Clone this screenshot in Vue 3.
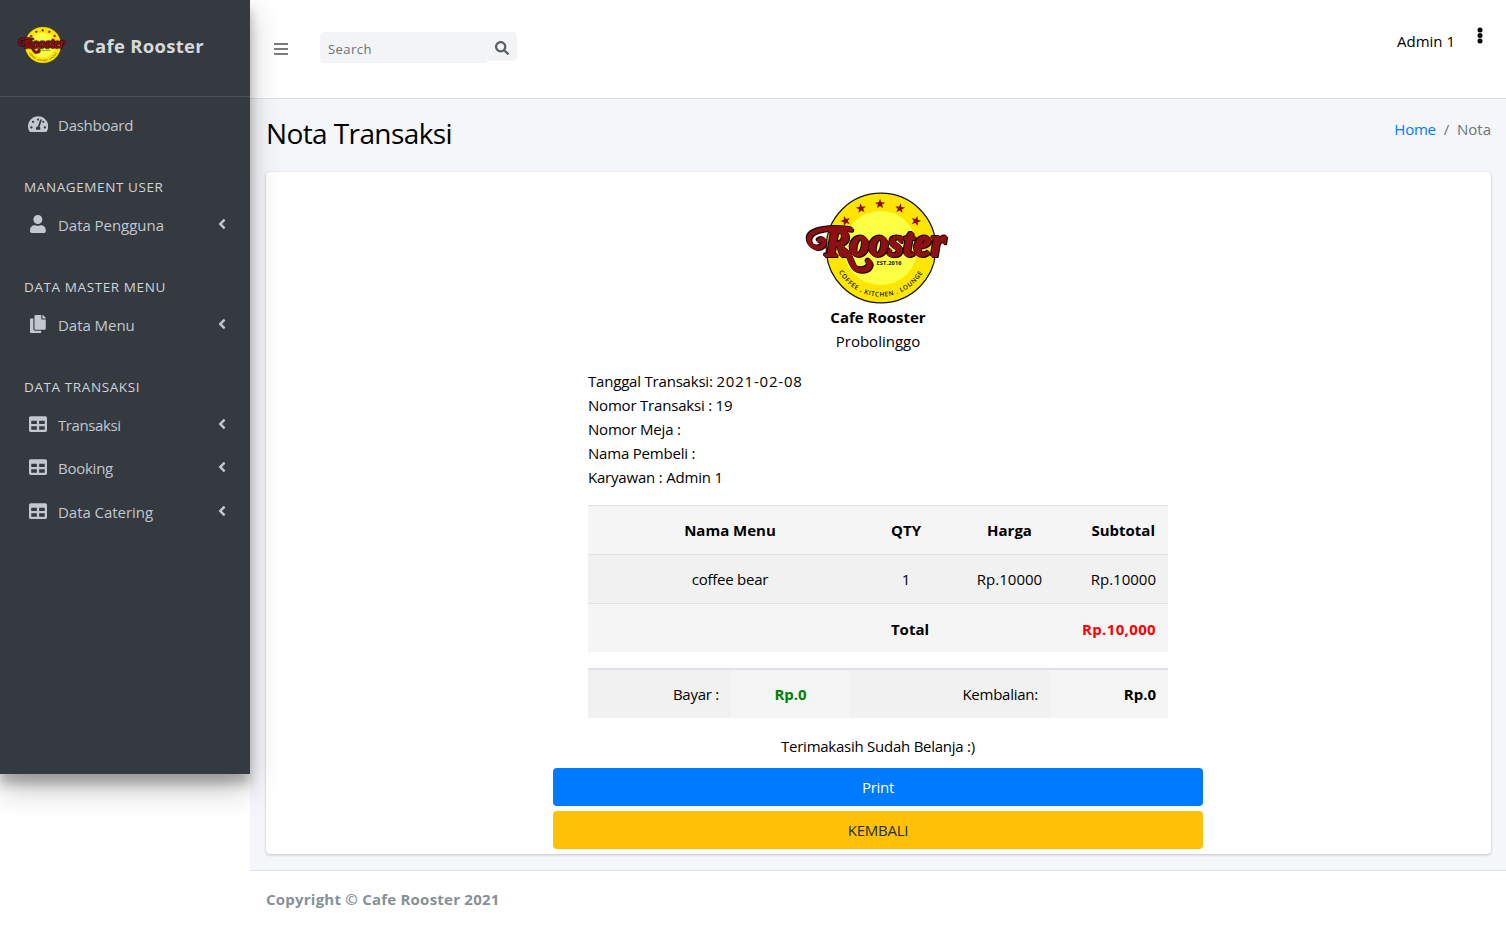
<script setup>
import { h } from 'vue'

const paths = {
  gauge: [576, 'M288 32C128.94 32 0 160.94 0 320c0 52.8 14.25 102.26 39.06 144.8 5.61 9.62 16.3 15.2 27.44 15.2h443c11.14 0 21.83-5.58 27.44-15.2C561.75 422.26 576 372.8 576 320c0-159.06-128.94-288-288-288zm0 64c14.71 0 26.58 10.13 30.32 23.65-1.11 2.26-2.64 4.23-3.45 6.67l-9.22 27.67c-5.13 3.49-10.97 6.01-17.64 6.01-17.67 0-32-14.33-32-32S270.33 96 288 96zM96 384c-17.67 0-32-14.33-32-32s14.33-32 32-32 32 14.33 32 32-14.33 32-32 32zm48-160c-17.67 0-32-14.33-32-32s14.33-32 32-32 32 14.33 32 32-14.33 32-32 32zm246.77-72.41l-61.33 184C343.13 347.33 352 364.54 352 384c0 11.72-3.38 22.55-8.88 32H232.88c-5.5-9.45-8.88-20.28-8.88-32 0-33.94 26.5-61.43 59.9-63.59l61.34-184.01c4.17-12.56 17.73-19.45 30.36-15.17 12.57 4.19 19.35 17.79 15.17 30.36zm14.66 57.2l15.52-46.55c3.47-1.29 7.13-2.23 11.05-2.23 17.67 0 32 14.33 32 32s-14.33 32-32 32c-11.38-.01-20.89-6.28-26.57-15.22zM480 384c-17.67 0-32-14.33-32-32s14.33-32 32-32 32 14.33 32 32-14.33 32-32 32z'],
  user: [448, 'M224 256c70.7 0 128-57.3 128-128S294.7 0 224 0 96 57.3 96 128s57.3 128 128 128zm89.6 32h-16.7c-22.2 10.2-46.9 16-72.9 16s-50.6-5.8-72.9-16h-16.7C60.2 288 0 348.2 0 422.4V464c0 26.5 21.5 48 48 48h352c26.5 0 48-21.5 48-48v-41.6c0-74.2-60.2-134.4-134.4-134.4z'],
  copy: [448, 'M320 448v40c0 13.255-10.745 24-24 24H24c-13.255 0-24-10.745-24-24V120c0-13.255 10.745-24 24-24h72v296c0 30.879 25.121 56 56 56h168zm0-344V0H152c-13.255 0-24 10.745-24 24v368c0 13.255 10.745 24 24 24h272c13.255 0 24-10.745 24-24V128H344c-13.2 0-24-10.8-24-24zm120.971-31.029L375.029 7.029A24 24 0 0 0 358.059 0H352v96h96v-6.059a24 24 0 0 0-7.029-16.97z'],
  table: [512, 'M464 32H48C21.49 32 0 53.49 0 80v352c0 26.51 21.49 48 48 48h416c26.51 0 48-21.49 48-48V80c0-26.51-21.49-48-48-48zM224 416H64v-96h160v96zm0-160H64v-96h160v96zm224 160H288v-96h160v96zm0-160H288v-96h160v96z'],
  angle: [256, 'M31.7 239l136-136c9.4-9.4 24.6-9.4 33.9 0l22.6 22.6c9.4 9.4 9.4 24.6 0 33.9L127.9 256l96.4 96.4c9.4 9.4 9.4 24.6 0 33.9L201.7 409c-9.4 9.4-24.6 9.4-33.9 0l-136-136c-9.5-9.4-9.5-24.6-.1-34z'],
  search: [512, 'M505 442.7L405.3 343c-4.5-4.5-10.6-7-17-7H372c27.6-35.3 44-79.7 44-128C416 93.1 322.9 0 208 0S0 93.1 0 208s93.1 208 208 208c48.3 0 92.7-16.4 128-44v16.3c0 6.4 2.5 12.5 7 17l99.7 99.7c9.4 9.4 24.6 9.4 33.9 0l28.3-28.3c9.4-9.4 9.4-24.6.1-34zM208 336c-70.7 0-128-57.2-128-128 0-70.7 57.2-128 128-128 70.7 0 128 57.2 128 128 0 70.7-57.2 128-128 128z'],
}

const Icon = (props) =>
  h('svg', { viewBox: `0 0 ${paths[props.name][0]} 512`, fill: 'currentColor' }, [
    h('path', { d: paths[props.name][1] }),
  ])
Icon.props = ['name']

const star = 'M0-5.2 1.3-1.7 5-1.6 2.1.7 3.1 4.2 0 2.1-3.1 4.2-2.1.7-5-1.6-1.3-1.7Z'
const stars = [[42.5, 48, -18], [58, 35.5, -8], [77, 31, 0], [97, 35.5, 8], [113, 48, 18]]
const swashes = [
  'M48 56.5C32 54 6 55 6 66C6 76 19 77 21 70.5C22 66.5 18.5 65 16 67.5',
  'M42 78C50 84 47 97 58 97C66 97 68.5 91.5 65.5 88.5',
]

const Logo = (props) => {
  return h('svg', { viewBox: '0 15 150 120' }, [
    h('circle', { cx: 78, cy: 75, r: 54.8, fill: '#ffe600', stroke: '#111', 'stroke-width': 1.2 }),
    h('circle', { cx: 77.5, cy: 75, r: 37, fill: '#fbff43' }),
    ...stars.map(([x, y, r]) => h('path', { d: star, fill: '#8e0d14', transform: `translate(${x} ${y}) rotate(${r})` })),
    h('g', { class: 'wordmark' }, [
      ...swashes.map((d, i) => h('path', { d, fill: 'none', stroke: '#8e1015', 'stroke-width': 4.6 + i, 'stroke-linecap': 'round' })),
      h('text', { x: 22, y: 82.5, textLength: 121, lengthAdjust: 'spacingAndGlyphs', class: 'word' }, [
        h('tspan', { 'font-size': 40 }, 'R'),
        h('tspan', { 'font-size': 41 }, 'ooster'),
      ]),
    ]),
    h('text', { x: 73.5, y: 92.2, class: 'est', textLength: 25 }, 'EST.2016'),
    h('path', { id: props.arc, d: 'M34.5 96.5A48.5 48.5 0 0 0 121.5 96.5', fill: 'none' }),
    h('text', { class: 'ring' }, [
      h('textPath', { href: '#' + props.arc, startOffset: '2.5%', textLength: 101 }, 'COFFEE . KITCHEN . LOUNGE'),
    ]),
  ])
}
Logo.props = ['arc']

const groups = [
  { items: [{ icon: 'gauge', label: 'Dashboard', leaf: true }] },
  { title: 'MANAGEMENT USER', items: [{ icon: 'user', label: 'Data Pengguna', cls: 'loose' }] },
  { title: 'DATA MASTER MENU', items: [{ icon: 'copy', label: 'Data Menu', cls: 'loose' }] },
  {
    title: 'DATA TRANSAKSI',
    items: [
      { icon: 'table', label: 'Transaksi', cls: 'tight' },
      { icon: 'table', label: 'Booking' },
      { icon: 'table', label: 'Data Catering', cls: 'loose' },
    ],
  },
]
const info = [
  ['Nomor Transaksi :', '19'],
  ['Nomor Meja :', ''],
  ['Nama Pembeli :', ''],
  ['Karyawan :', 'Admin 1'],
]
</script>

<template>
  <div class="page">
    <aside class="sidebar">
      <div class="brand">
        <Logo class="brand-logo" arc="arc-small" />
        <b>Cafe Rooster</b>
      </div>
      <nav>
        <section v-for="(g, i) in groups" :key="i">
          <h6 v-if="g.title">{{ g.title }}</h6>
          <a v-for="it in g.items" :key="it.label" class="item">
            <span class="ico"><Icon :name="it.icon" /></span>
            <span class="label" :class="it.cls">{{ it.label }}</span>
            <Icon v-if="!it.leaf" class="chev" name="angle" />
          </a>
        </section>
      </nav>
    </aside>

    <div class="main">
      <header class="topbar">
        <svg class="bars" viewBox="0 0 14 12"><path d="M0 1H14M0 6H14M0 11H14" stroke="#7b7b7b" stroke-width="2" /></svg>
        <div class="search">
          <div class="field">Search</div>
          <div class="go"><Icon name="search" /></div>
        </div>
        <span class="user">Admin 1</span>
        <svg class="dots" viewBox="0 0 6 17"><circle cx="3" cy="3" r="2.5" /><circle cx="3" cy="8.5" r="2.5" /><circle cx="3" cy="14" r="2.5" /></svg>
      </header>

      <div class="content">
        <div class="heading">
          <h1>Nota Transaksi</h1>
          <div class="crumbs"><a>Home</a><i>/</i><span>Nota</span></div>
        </div>

        <div class="card">
          <Logo class="logo" arc="arc-large" />
          <div class="center"><b>Cafe Rooster</b></div>
          <div class="center prob">Probolinggo</div>

          <div class="receipt">
            <div class="info">
              <div>Tanggal Transaksi: <span class="date">2021-02-08</span></div>
              <div v-for="[k, v] in info" :key="k">{{ k }} {{ v }}</div>
            </div>
            <div class="row"><b>Nama Menu</b><b>QTY</b><b>Harga</b><b class="end sub">Subtotal</b></div>
            <div class="row odd"><span>coffee bear</span><span>1</span><span class="price">Rp.10000</span><span class="end price">Rp.10000</span></div>
            <div class="row last"><span></span><b class="total">Total</b><span></span><b class="end red">Rp.10,000</b></div>
            <div class="pay">
              <span class="shade">Bayar :</span><b class="green">Rp.0</b><span class="shade">Kembalian:</span><b class="end">Rp.0</b>
            </div>
          </div>

          <div class="center thanks">Terimakasih Sudah Belanja :)</div>
          <div class="btn print">Print</div>
          <div class="btn back">KEMBALI</div>
        </div>
      </div>

      <footer><b>Copyright © Cafe Rooster 2021</b></footer>
    </div>
  </div>
</template>

<style>
body { background: #fff; overflow: hidden; }
</style>

<style scoped>
.page {
  display: flex;
  align-items: flex-start;
  height: 927px;
  font: 15px/24px "Open Sans", "Noto Sans", sans-serif;
  letter-spacing: -0.25px;
  color: #000;
}
b { font-weight: 700; letter-spacing: 0; }
svg { display: block; flex: none; }

.sidebar {
  position: relative;
  z-index: 2;
  flex: none;
  width: 250px;
  height: 774px;
  background: #343a40;
  color: #c2c7d0;
  box-shadow: 0 14px 28px rgba(0, 0, 0, .25), 0 10px 10px rgba(0, 0, 0, .22);
}
.brand {
  box-sizing: border-box;
  display: flex;
  height: 97px;
  padding: 25px 0 0 17px;
  border-bottom: 1px solid #4b545c;
}
.brand-logo { width: 50px; height: 40px; }
.brand b { margin: 9px 0 0 16px; font-size: 18.5px; letter-spacing: .28px; color: #d6d8d9; }
nav { padding-top: 8px; }
section { margin-bottom: 18px; }
h6 {
  margin: 0;
  padding: 12px 24px 6px;
  font: 400 13.5px/24px "Open Sans", sans-serif;
  letter-spacing: .6px;
  color: #d0d4db;
}
.item { display: flex; align-items: center; height: 40px; margin-bottom: 3.4px; padding: 0 24px; }
section:first-child .item { margin-bottom: 3px; }
.ico { display: flex; justify-content: center; width: 28px; margin: -2px 6px 0 0; }
.ico svg { height: 18px; }
.label { flex: 1; }
.loose { letter-spacing: -.04px; }
.tight { letter-spacing: -.4px; }
.chev { height: 16px; margin: -2px 0 0 0; }

.main { flex: 1; height: 927px; }
.topbar {
  box-sizing: border-box;
  display: flex;
  height: 99px;
  padding: 32px 24px 0 24px;
  border-bottom: 1px solid #dee2e6;
}
.bars { width: 14px; height: 12px; margin-top: 11px; }
.search { display: flex; margin-left: 32px; }
.field {
  width: 159px;
  height: 31px;
  padding-left: 8px;
  border-radius: 4px 0 0 4px;
  background: #f2f4f6;
  font-size: 13px;
  line-height: 34px;
  letter-spacing: .45px;
  color: #6c7075;
}
.go {
  display: flex;
  width: 30px;
  height: 29px;
  border-radius: 0 4px 4px 0;
  background: #f2f4f6;
  color: #5c5f62;
}
.go svg { width: 14px; height: 14px; margin: 9px 0 0 8px; }
.user { margin-left: auto; line-height: 18px; letter-spacing: 0; }
.dots { width: 6px; height: 17px; margin: -5px -.5px 0 21.5px; }

.content { height: 771px; background: #f4f6f9; border-bottom: 1px solid #dee2e6; }
.heading { display: flex; justify-content: space-between; padding: 15px 15px 0 16px; height: 58px; }
h1 { margin: 0; font-size: 28px; line-height: 38px; font-weight: 400; letter-spacing: -.6px; }
.crumbs { display: flex; line-height: 30px; color: #6c757d; }
.crumbs a { color: #007bff; }
.crumbs i { padding: 0 8px; font-style: normal; }
.crumbs span { letter-spacing: 0; }
.card {
  box-sizing: border-box;
  height: 682px;
  margin: 0 15px 0 16px;
  padding: 16px 1px 0 0;
  border-radius: 4px;
  background: #fff;
  box-shadow: 0 0 1px rgba(0, 0, 0, .125), 0 1px 3px rgba(0, 0, 0, .2);
}
.logo { width: 150px; height: 120px; margin: 0 auto -3px; }
.center { text-align: center; }
.prob { letter-spacing: 0; }
.receipt { width: 580px; margin: 16px auto 0; }
.info { margin-bottom: 16px; letter-spacing: -.2px; }
.date { letter-spacing: .8px; }
.row { display: grid; grid-template-columns: 284px 68px 139px 89px; height: 48px; border-top: 1px solid #dee2e6; background: #f5f5f5; line-height: 48px; text-align: center; }
.odd { background: #f1f1f1; }
.last { line-height: 50px; }
.end { padding-right: 12px; text-align: right; }
.sub { padding-right: 13px; }
.price { letter-spacing: 0; }
.total { padding-left: 8px; }
.red { color: #f00; letter-spacing: .35px; }
.green { color: green; text-align: center; }
.pay { display: grid; grid-template-columns: 143px 119px 200px 118px; height: 48px; margin-top: 16px; border-top: 2px solid #dee2e6; background: #f5f5f5; line-height: 48px; }
.shade { padding-right: 12px; background: #f1f1f1; text-align: right; }
.thanks { margin: 16px 0 10px; }
.btn { width: 650px; height: 38px; margin: 0 auto 5px; border-radius: 4px; line-height: 39px; text-align: center; }
.print { background: #007bff; color: #fff; }
.back { background: #ffc107; color: #1f2d3d; }
footer { padding: 16px; color: #869099; }
footer b { letter-spacing: .23px; }

:deep(.word) {
  font-family: "Liberation Serif", serif;
  font-weight: 700;
  font-style: italic;
  letter-spacing: 0;
  fill: #8e1015;
  stroke: #8e1015;
  stroke-width: 2px;
  stroke-linejoin: round;
}
:deep(.wordmark) {
  filter: drop-shadow(1.2px 1.2px 0 #120303) drop-shadow(-.6px -.5px 0 #120303);
}
:deep(.est) { font: 700 5.6px "Open Sans", sans-serif; letter-spacing: 0; fill: #111; }
:deep(.ring) { font: 600 6.4px "Open Sans", sans-serif; letter-spacing: 0; fill: #111; }
</style>
